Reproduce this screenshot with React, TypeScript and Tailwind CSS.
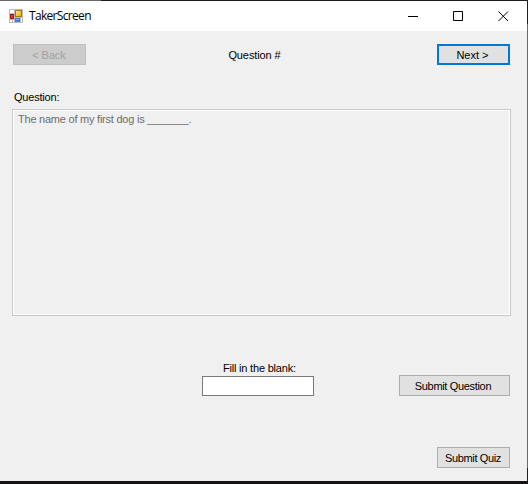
import type { ReactNode } from "react";

function AppIcon() {
  return (
    <svg className="block h-[14px] w-[14px] shrink-0" viewBox="0 0 14 14" shapeRendering="crispEdges">
      <defs>
        <linearGradient id="gold" x1="0" y1="0" x2="1" y2="1">
          <stop offset="0" stopColor="#ffe88a" />
          <stop offset="1" stopColor="#e9a800" />
        </linearGradient>
      </defs>
      <rect width="14" height="14" fill="#bcbcbc" />
      <rect x="1" y="1" width="4" height="3" fill="#fff" />
      <rect x="1" y="11" width="2" height="2" fill="#fff" />
      <rect x="4" y="11" width="1" height="2" fill="#fff" />
      <rect x="12" y="9" width="1" height="4" fill="#fff" />
      <rect x="1" y="5" width="4" height="5" fill="#a81410" />
      <rect x="2" y="6" width="2" height="3" fill="#d8402f" />
      <rect x="6" y="1" width="7" height="7" fill="#a87800" />
      <rect x="7" y="2" width="5" height="5" fill="url(#gold)" />
      <rect x="6" y="9" width="5" height="4" fill="#3d78dc" />
      <rect x="7" y="10" width="3" height="1" fill="#8db8f8" />
    </svg>
  );
}

function Button({ className, children, disabled }: { className: string; children: ReactNode; disabled?: boolean }) {
  return (
    <button
      disabled={disabled}
      className={`flex h-[21px] shrink-0 items-center justify-center whitespace-nowrap pt-px leading-none ${className}`}
    >
      {children}
    </button>
  );
}

export default function App() {
  return (
    <div className="flex h-[484px] w-[528px] flex-col overflow-hidden border-b-[3px] border-b-[#151214] bg-[#f0f0f0] font-['Liberation_Sans',Arial,sans-serif] text-[11px] leading-[13px] text-black">
      <div className="flex h-px shrink-0 bg-[#1f1b1f]">
        <div className="w-[101px] bg-[#686868]" />
      </div>
      <div className="flex min-h-0 flex-1">
        <div className="flex w-[527px] flex-col">
          <header className="flex h-[30px] shrink-0 items-center bg-white pl-[9px] pr-[18px]">
            <AppIcon />
            <h1 className="ml-[6px] flex-1 font-['Open_Sans','Noto_Sans',sans-serif] text-[12px] leading-[16px] tracking-[-0.68px]">
              TakerScreen
            </h1>
            <svg className="block h-[11px] w-[101px]" viewBox="0 0 101 11" fill="none" stroke="#000">
              <path d="M0 5.5H10" />
              <path d="M45.5 .5H54.5V9.5H45.5Z" />
              <path d="M90.5 .5L100 10M100 .5L90.5 10" />
            </svg>
          </header>

          <main className="flex flex-1 flex-col pl-3 pr-[16px] pt-[13px]">
            <nav className="flex items-center justify-between pl-px pr-px">
              <Button disabled className="w-[73px] border border-[#bfbfbf] bg-[#cccccc] pr-px tracking-[-0.1px] text-[#a0a0a0]">
                &lt; Back
              </Button>
              <span className="-ml-[14px] pt-[2px] tracking-[-0.1px]">Question #</span>
              <Button className="w-[73px] border-2 border-[#0078d7] bg-[#e1e1e1] pr-[2px]">Next &gt;</Button>
            </nav>

            <div className="mt-[26px] pl-[2px] tracking-[-0.2px]">Question:</div>
            <div className="mt-[5px] h-[207px] w-[499px] border border-[#c8c8c8]">
              <div className="h-full border border-white pl-1 pt-[2px] tracking-[-0.23px] text-[#6d6d6d]">
                The name of my first dog is _______.
              </div>
            </div>

            <div className="flex items-end justify-between pl-[190px] pr-px pt-[46px]">
              <label className="flex w-[112px] flex-col">
                <span className="mb-px pl-[21px] tracking-[-0.2px]">Fill in the blank:</span>
                <input className="h-[20px] w-[112px] border border-[#7a7a7a] bg-white px-1 outline-none" />
              </label>
              <Button className="w-[111px] border border-[#adadad] bg-[#e1e1e1] pr-[3px] tracking-[-0.33px]">
                Submit Question
              </Button>
            </div>
            <div className="flex justify-end pr-px pt-[51px]">
              <Button className="w-[73px] border border-[#adadad] bg-[#e1e1e1] pr-px tracking-[-0.36px]">
                Submit Quiz
              </Button>
            </div>
          </main>
        </div>
        <div className="flex w-px flex-col">
          <div className="h-[23px] bg-[#211d21]" />
          <div className="flex-1 bg-[#6a6a6a]" />
          <div className="h-[13px] bg-[#211d21]" />
        </div>
      </div>
    </div>
  );
}
